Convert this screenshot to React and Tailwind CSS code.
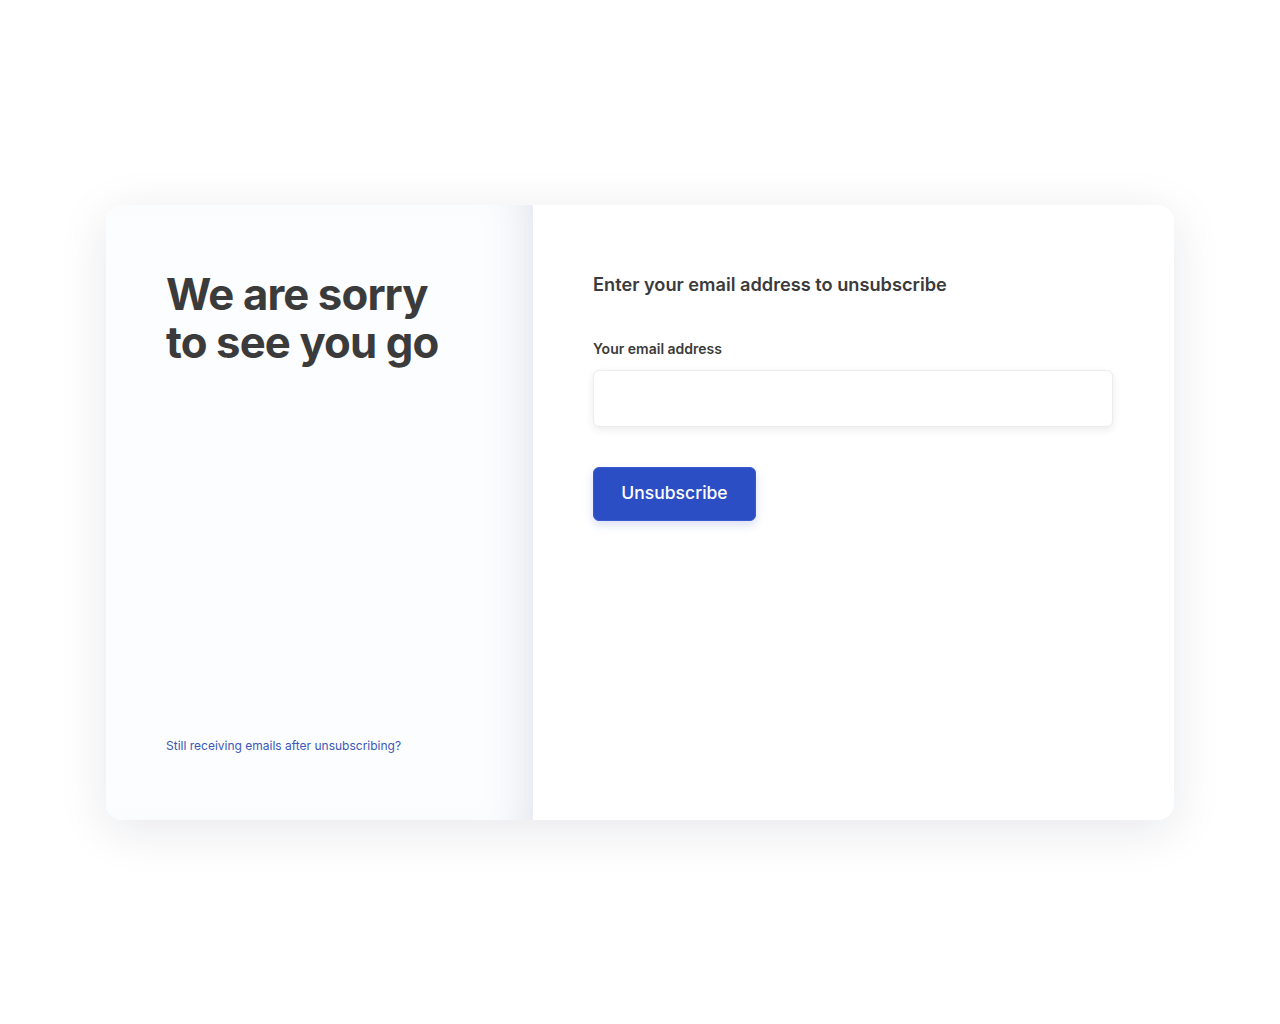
import React, { useState } from 'react';

const App = () => {
    const [email, setEmail] = useState('');

    return (
        <div className="min-h-screen w-full bg-white flex items-center justify-center" style={{ fontFamily: 'Inter, "Noto Sans", sans-serif' }}>
            <div className="w-[1068px] h-[615px] flex rounded-2xl bg-white shadow-[0_10px_50px_rgba(20,30,60,0.10)] overflow-hidden">
                {/* left side */}
                <div className="w-[427px] h-full bg-[#fcfdfe] shadow-[inset_-40px_0_40px_-30px_rgba(200,205,220,0.45)] flex flex-col justify-between px-[60px] pt-[66px] pb-[65px]">
                    <h1 className="text-[43.7px] leading-[48px] font-bold tracking-[-0.02em] text-[#3b3b3b]">
                        We are sorry<br />to see you go
                    </h1>
                    <a href="#" className="text-[12px] leading-[18px] text-[#3a58b8] hover:underline">
                        Still receiving emails after unsubscribing?
                    </a>
                </div>

                {/* right side */}
                <div className="flex-1 h-full px-[60px] pt-[65px]">
                    <h2 className="text-[18.2px] leading-[28px] font-semibold text-[#3b3b3b]">
                        Enter your email address to unsubscribe
                    </h2>
                    <form className="mt-[41px]" onSubmit={(e) => e.preventDefault()}>
                        <label htmlFor="email" className="block text-[14px] leading-[20px] font-semibold text-[#3b3b3b]">
                            Your email address
                        </label>
                        <input
                            id="email"
                            type="email"
                            value={email}
                            onChange={(e) => setEmail(e.target.value)}
                            className="mt-[11px] block w-[520px] h-[57px] rounded-md border border-[#ececec] bg-white px-4 text-[16px] text-[#3b3b3b] shadow-[0_3px_8px_rgba(0,0,0,0.08)] focus:outline-none"
                        />
                        <button
                            type="submit"
                            className="mt-[40px] w-[163px] h-[54px] rounded-md bg-[#2c4ec5] border border-[#3a5bd0] text-white text-[17.5px] font-medium shadow-[0_4px_10px_rgba(44,78,197,0.18)]"
                        >
                            Unsubscribe
                        </button>
                    </form>
                </div>
            </div>
        </div>
    );
};

export default App;
